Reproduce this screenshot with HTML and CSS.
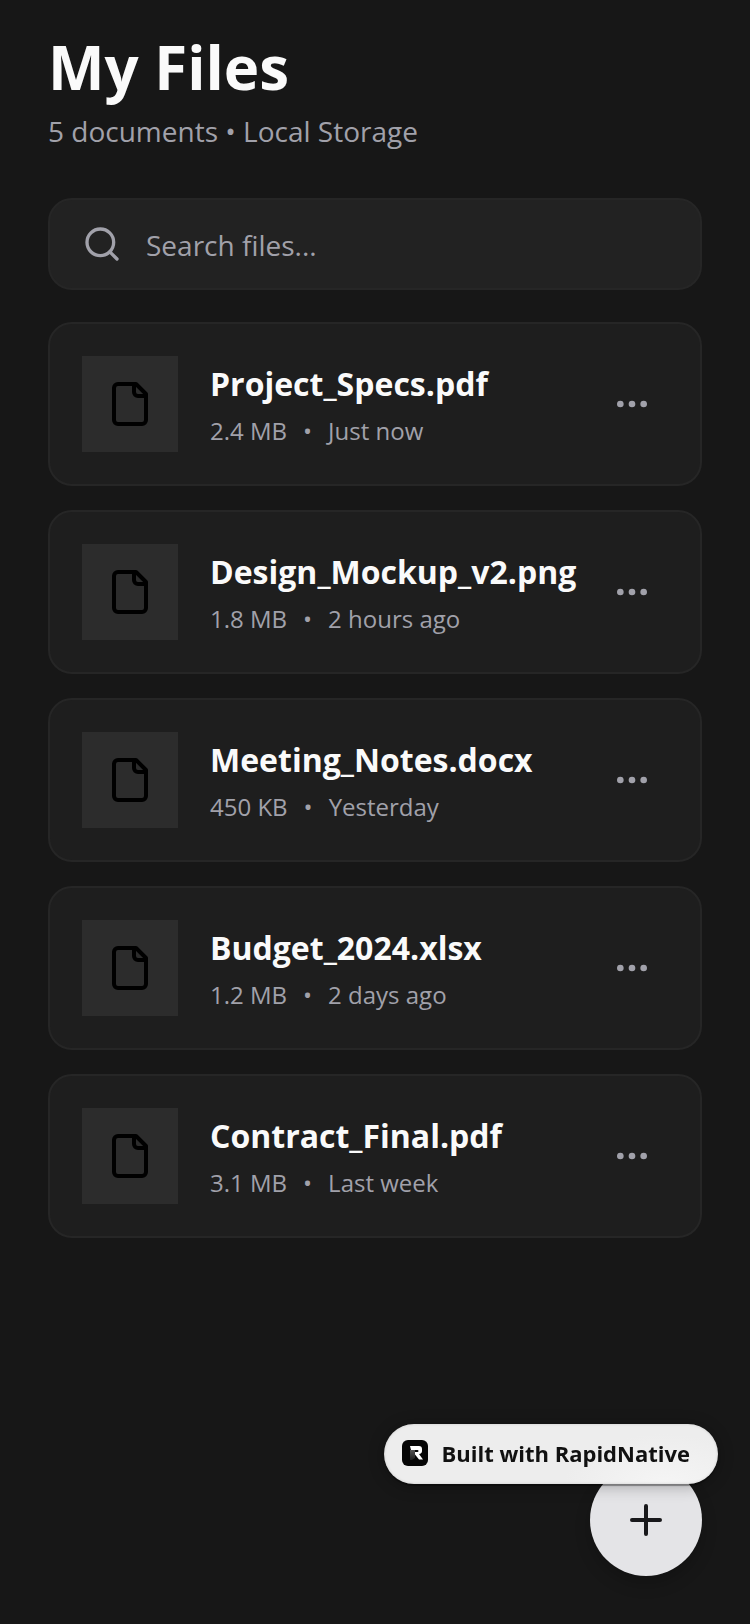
FILE: index.html
```
<!DOCTYPE html>
<html lang="en">
<head>
<meta charset="utf-8">
<meta name="viewport" content="width=device-width, initial-scale=1">
<title>My Files</title>
<link rel="stylesheet" href="styles.css">
</head>
<body>
<svg class="sprite" aria-hidden="true">
  <symbol id="file" viewBox="0 0 24 24"><path d="M15 2H6a2 2 0 0 0-2 2v16a2 2 0 0 0 2 2h12a2 2 0 0 0 2-2V7Z"/><path d="M14 2v4a2 2 0 0 0 2 2h4"/></symbol>
  <symbol id="more" viewBox="0 0 24 24"><circle cx="12" cy="12" r="1"/><circle cx="19" cy="12" r="1"/><circle cx="5" cy="12" r="1"/></symbol>
</svg>
<main class="page">
  <header class="header">
    <h1 class="title">My Files</h1>
    <p class="subtitle">5 documents • Local Storage</p>
  </header>
  <label class="search">
    <svg class="icon icon-small" viewBox="0 0 24 24" aria-hidden="true"><circle cx="11" cy="11" r="8"/><path d="m21 21-4.3-4.3"/></svg>
    <input class="search-input" type="text" placeholder="Search files..." aria-label="Search files">
  </label>
  <ul class="files">
    <li class="card">
      <span class="thumb"><svg class="icon"><use href="#file"/></svg></span>
      <div class="info"><h2 class="name">Project_Specs.pdf</h2><p class="meta"><span>2.4 MB</span><span>•</span><span>Just now</span></p></div>
      <button class="more" aria-label="More options for Project_Specs.pdf"><svg class="icon icon-small"><use href="#more"/></svg></button>
    </li>
    <li class="card">
      <span class="thumb"><svg class="icon"><use href="#file"/></svg></span>
      <div class="info"><h2 class="name">Design_Mockup_v2.png</h2><p class="meta"><span>1.8 MB</span><span>•</span><span>2 hours ago</span></p></div>
      <button class="more" aria-label="More options for Design_Mockup_v2.png"><svg class="icon icon-small"><use href="#more"/></svg></button>
    </li>
    <li class="card">
      <span class="thumb"><svg class="icon"><use href="#file"/></svg></span>
      <div class="info"><h2 class="name">Meeting_Notes.docx</h2><p class="meta"><span>450 KB</span><span>•</span><span>Yesterday</span></p></div>
      <button class="more" aria-label="More options for Meeting_Notes.docx"><svg class="icon icon-small"><use href="#more"/></svg></button>
    </li>
    <li class="card">
      <span class="thumb"><svg class="icon"><use href="#file"/></svg></span>
      <div class="info"><h2 class="name">Budget_2024.xlsx</h2><p class="meta"><span>1.2 MB</span><span>•</span><span>2 days ago</span></p></div>
      <button class="more" aria-label="More options for Budget_2024.xlsx"><svg class="icon icon-small"><use href="#more"/></svg></button>
    </li>
    <li class="card">
      <span class="thumb"><svg class="icon"><use href="#file"/></svg></span>
      <div class="info"><h2 class="name">Contract_Final.pdf</h2><p class="meta"><span>3.1 MB</span><span>•</span><span>Last week</span></p></div>
      <button class="more" aria-label="More options for Contract_Final.pdf"><svg class="icon icon-small"><use href="#more"/></svg></button>
    </li>
  </ul>
</main>
<button class="fab" aria-label="Add file"><svg class="icon" viewBox="0 0 24 24"><path d="M5 12h14M12 5v14"/></svg></button>
<a class="badge" href="#">
  <svg class="logo" viewBox="0 0 26 26" aria-hidden="true">
    <defs><linearGradient id="fade" x1="0" y1="0" x2="0" y2="1"><stop offset="0" stop-color="#555"/><stop offset="1" stop-color="#1c1c1c"/></linearGradient></defs>
    <rect width="26" height="26" rx="6" fill="#050505"/>
    <path d="M8 10h5v8l-3 2H8z" fill="url(#fade)"/>
    <path d="M8 6h9q3 0 3 3v2q0 2.500-3 3l4 5.500h-4l-4-5v-2.500h2.500q1 0 1-1t-1-1H9z" fill="#fff"/>
  </svg>
  <span>Built with RapidNative</span>
</a>
</body>
</html>
```
FILE: styles.css
```
* { box-sizing: border-box; }
body {
  margin: 0;
  min-height: 100vh;
  background: #171717;
  color: #fafafa;
  font-family: "Open Sans", "Noto Sans", sans-serif;
}
h1, h2, p, ul { margin: 0; padding: 0; }
button { border: 0; padding: 0; background: none; cursor: pointer; }
.sprite { position: absolute; width: 0; height: 0; }
.page { padding: 32px 48px 200px; }
.header { display: flex; flex-direction: column; gap: 8px; }
.title { font-size: 60px; line-height: 70px; font-weight: 700; }
.subtitle { font-size: 28px; line-height: 42px; color: #a1a1aa; }
.icon {
  width: 48px;
  height: 48px;
  flex: none;
  fill: none;
  stroke: currentColor;
  stroke-width: 2;
  stroke-linecap: round;
  stroke-linejoin: round;
}
.icon-small { width: 40px; height: 40px; }
.search {
  display: flex;
  align-items: center;
  gap: 24px;
  margin-top: 46px;
  padding: 24px 32px;
  border: 2px solid #262626;
  border-radius: 24px;
  background: #222222;
  color: #a1a1aa;
}
.search-input {
  flex: 1;
  min-width: 0;
  height: 40px;
  padding: 2px 0 0;
  border: 0;
  outline: 0;
  background: none;
  color: #fafafa;
  font: 28px "Open Sans", "Noto Sans", sans-serif;
}
.search-input::placeholder { color: #a1a1aa; opacity: 1; }
.files { display: grid; gap: 24px; margin-top: 32px; list-style: none; }
.card {
  display: flex;
  align-items: center;
  gap: 32px;
  padding: 32px;
  border: 2px solid #262626;
  border-radius: 24px;
  background: #1e1e1e;
}
.thumb {
  display: grid;
  place-items: center;
  width: 96px;
  height: 96px;
  flex: none;
  background: #2c2c2c;
  color: #000;
}
.info { flex: 1; min-width: 0; }
.name { font-size: 32px; line-height: 46px; font-weight: 700; }
.meta { display: flex; gap: 16px; margin-top: 8px; font-size: 24px; line-height: 32px; color: #a1a1aa; }
.more { display: flex; margin-left: -32px; padding: 16px; color: #a1a1aa; }
.fab {
  position: fixed;
  right: 48px;
  bottom: 48px;
  display: grid;
  place-items: center;
  width: 112px;
  height: 112px;
  border-radius: 50%;
  background: #e4e4e7;
  color: #18181b;
  box-shadow: 0 8px 16px rgba(0, 0, 0, 0.2);
}
.badge {
  position: fixed;
  right: 32px;
  bottom: 140px;
  display: flex;
  align-items: center;
  gap: 13px;
  height: 60px;
  padding: 0 28px 2px 18px;
  border-radius: 30px;
  background: radial-gradient(ellipse 100px 50px at 84% 100%, #f5f5f5, #ededed);
  box-shadow: 0 2px 1px rgba(0, 0, 0, 0.35), 0 2px 16px rgba(0, 0, 0, 0.3), inset 0 0 3px rgba(0, 0, 0, 0.15);
  color: #111;
  font-size: 22px;
  line-height: 32px;
  font-weight: 700;
  text-decoration: none;
}
.logo { width: 26px; height: 26px; }
```
